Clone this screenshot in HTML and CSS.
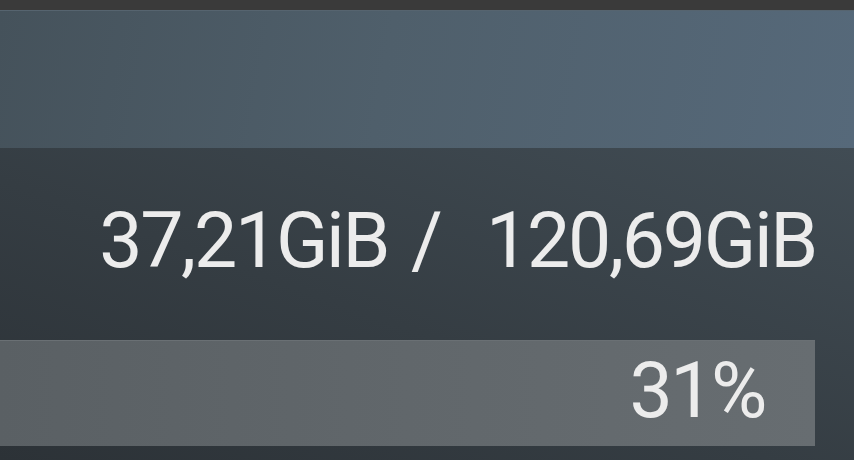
FILE: index.html
```html
<!DOCTYPE html>
<html lang="en">

<head>
    <meta charset="UTF-8" />
    <title>Storage</title>
    <link rel="stylesheet" href="styles.css">
</head>

<body>
    <div class="topbar"></div>
    <div class="header"></div>

    <div class="storage">
        <p class="usage">37,21GiB /  120,69GiB</p>
        <div class="bar">
            <div class="bar-fill">31%</div>
        </div>
    </div>
</body>

</html>
```

FILE: styles.css
```css
html,
body {
    margin: 0;
    height: 100%;
    overflow: hidden;
}

body {
    background-color: #353e44;
    font-family: Roboto, "Liberation Sans", sans-serif;
    color: #ececec;
    display: flex;
    flex-direction: column;
}

.topbar {
    height: 10px;
    background-color: #3a3a3a;
}

.header {
    height: 138px;
    border-top: 1px solid #56646f;
    box-sizing: border-box;
    background: linear-gradient(100deg, #45525b 0%, #4f5f6b 45%, #56697a 100%);
}

.storage {
    flex: 1;
    background: linear-gradient(20deg, #2c3237 0%, #353d43 45%, #414c54 100%);
    padding-top: 55px;
}

.usage {
    margin: 0;
    font-size: 77px;
    line-height: 77px;
    text-align: right;
    padding-right: 38px;
    white-space: pre;
    letter-spacing: -2.3px;
    word-spacing: 6px;
}

.bar {
    margin-top: 60px;
    width: 815px;
    height: 106px;
    background: linear-gradient(90deg, #5a6064 0%, #61676b 50%, #676d71 100%);
    border-top: 1px solid #6a7074;
    box-sizing: border-box;
}

.bar-fill {
    font-size: 77px;
    line-height: 100px;
    text-align: right;
    padding-right: 50px;
    letter-spacing: -2.5px;
}
```
